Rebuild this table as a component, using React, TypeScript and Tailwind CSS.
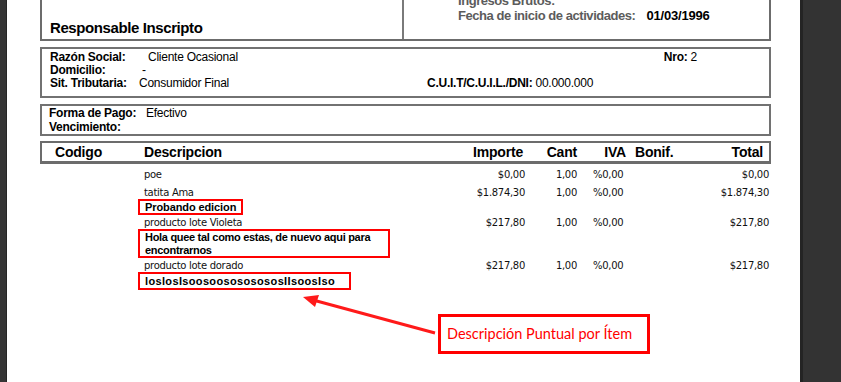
import React from 'react'

type Item = {
  desc: string
  importe: string
  total: string
  nota?: string
  notaCls?: string
  mt: string
}

const items: Item[] = [
  { desc: 'poe', importe: '$0,00', total: '$0,00', mt: 'mt-[3px]' },
  { desc: 'tatita Ama', importe: '$1.874,30', total: '$1.874,30', nota: 'Probando edicion', notaCls: 'w-[105px] h-[16px] whitespace-nowrap tracking-[-0.1px]', mt: 'mt-[4px]' },
  { desc: 'producto lote Violeta', importe: '$217,80', total: '$217,80', nota: 'Hola quee tal como estas, de nuevo aqui para encontrarnos', notaCls: 'w-[252px] h-[29px]', mt: 'mt-[0px]' },
  { desc: 'producto lote dorado', importe: '$217,80', total: '$217,80', nota: 'loslosIsoosoosososososIIsoosIso', notaCls: 'w-[213px] h-[18px] whitespace-nowrap tracking-[0.35px]', mt: 'mt-[0px]' },
]

export default function App() {
  return (
    <div className="flex w-[841px] h-[382px] overflow-hidden bg-white font-['Liberation_Sans',Arial,sans-serif] text-black">
      {/* borde izquierdo del visor */}
      <div className="w-[7px] bg-[#353535] border-r border-[#262626]" />

      {/* hoja */}
      <div className="relative flex-1 bg-white">
        <div className="ml-[33px] w-[731px] flex flex-col">
          {/* cabecera emisor */}
          <div className="flex h-[41px] border-x-2 border-b-2 border-[#6c6c6c]">
            <div className="w-[362px] border-r-2 border-[#7a7a7a] flex items-end pl-[8px] pb-[2px]">
              <span className="text-[15px] font-bold tracking-[-0.4px] leading-[18px]">Responsable Inscripto</span>
            </div>
            <div className="flex-1 pl-[54px] mt-[-7px] text-[13px] font-bold leading-[15px] text-[#5c5c5c] tracking-[-0.45px]">
              <div>Ingresos Brutos:</div>
              <div className="flex">
                <span>Fecha de inicio de actividades:</span>
                <span className="ml-[11px] text-black tracking-[-0.2px]">01/03/1996</span>
              </div>
            </div>
          </div>

          {/* cliente */}
          <div className="mt-[6px] h-[51px] border-2 border-[#727272] pl-[8px] pt-[2px] text-[12px] leading-[13px] tracking-[-0.25px]">
            <div className="flex">
              <span className="font-bold w-[98px]">Razón Social:</span>
              <span>Cliente Ocasional</span>
              <span className="ml-auto mr-[72px]"><b>Nro:</b> 2</span>
            </div>
            <div className="flex">
              <span className="font-bold w-[92px]">Domicilio:</span>
              <span>-</span>
            </div>
            <div className="flex">
              <span className="font-bold w-[89px]">Sit. Tributaria:</span>
              <span className="w-[288px]">Consumidor Final</span>
              <span><b>C.U.I.T/C.U.I.L./DNI:</b> 00.000.000</span>
            </div>
          </div>

          {/* pago */}
          <div className="mt-[6px] h-[32px] border-2 border-[#727272] pl-[7px] pt-[0px] text-[12px] leading-[14px] tracking-[-0.25px]">
            <div className="flex">
              <span className="font-bold w-[97px]">Forma de Pago:</span>
              <span>Efectivo</span>
            </div>
            <div className="font-bold">Vencimiento:</div>
          </div>

          {/* encabezado tabla */}
          <div className="mt-[5px] h-[23px] border-2 border-b-[3px] border-[#6c6c6c] flex items-center text-[14px] font-bold tracking-[-0.2px]">
            <span className="w-[102px] pl-[13px]">Codigo</span>
            <span className="w-[301px]">Descripcion</span>
            <span className="w-[80px] text-right pr-[2px]">Importe</span>
            <span className="w-[52px] text-right">Cant</span>
            <span className="w-[58px] text-right pr-[9px]">IVA</span>
            <span className="w-[65px]">Bonif.</span>
            <span className="w-[67px] text-right pr-[4px]">Total</span>
          </div>

          {/* items */}
          <div className="flex flex-col font-['DejaVu_Sans',Tahoma,sans-serif] text-[10px] tracking-[-0.3px] text-[#111]">
            {items.map((it, i) => (
              <div key={i} className={it.mt}>
                <div className="flex h-[14px] items-center">
                  <span className="w-[104px]" />
                  <span className="w-[301px]">{it.desc}</span>
                  <span className="w-[80px] text-right">{it.importe}</span>
                  <span className="w-[52px] text-right">1,00</span>
                  <span className="w-[58px] pl-[16px]">%0,00</span>
                  <span className="w-[65px]" />
                  <span className="w-[69px] text-right">{it.total}</span>
                </div>
                {it.nota && (
                  <div
                    className={`ml-[98px] ${it.notaCls} border-[2.5px] border-[#ff0000] pl-[5px] pr-[4px] font-['Liberation_Sans',Arial,sans-serif] text-[11px] font-bold leading-[13px] text-black flex items-center`}
                  >
                    {it.nota}
                  </div>
                )}
              </div>
            ))}
          </div>
        </div>

        {/* anotación */}
        <svg className="absolute left-0 top-0 pointer-events-none" width="793" height="382">
          <line x1="428" y1="333" x2="306" y2="300" stroke="#ff1a1a" strokeWidth="3" />
          <polygon points="296,297 312,295 308,307" fill="#ff1a1a" />
        </svg>
        <div className="absolute left-[431px] top-[314px] w-[212px] h-[40px] border-[3px] border-[#ff0000] flex items-center pl-[6px] font-['Lato','Noto_Sans',sans-serif] text-[14.5px] text-[#ff0000]">
          Descripción Puntual por Ítem
        </div>
      </div>

      {/* fondo derecho del visor */}
      <div className="w-[41px] bg-[#333333] border-l-[3px] border-[#242424]" />
    </div>
  )
}
